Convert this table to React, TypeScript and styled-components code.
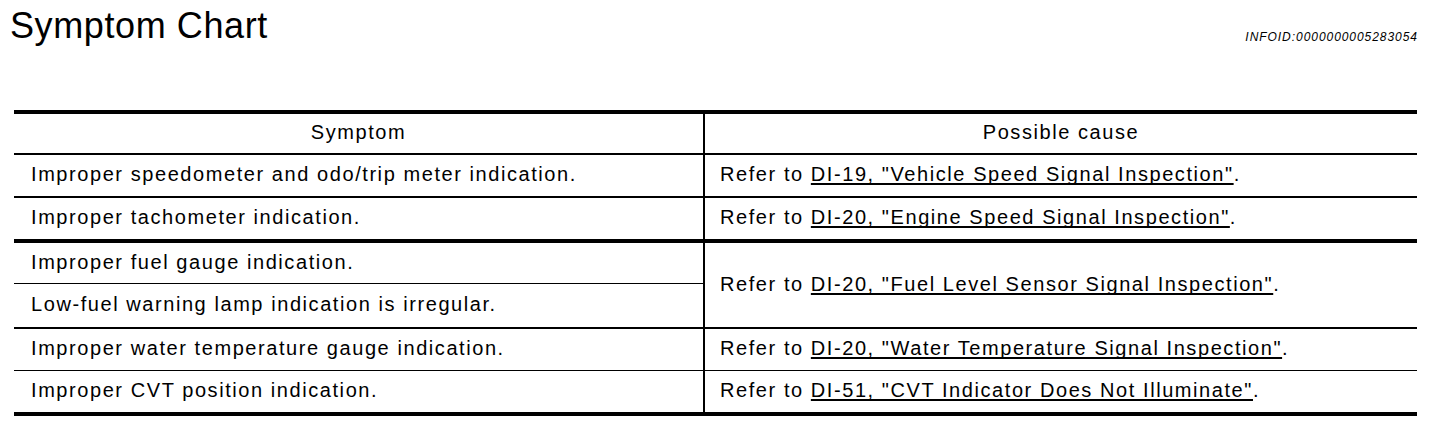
import React from "react";
import styled, { createGlobalStyle } from "styled-components";

const GlobalStyle = createGlobalStyle`
  html, body { margin: 0; padding: 0; background: #ffffff; }
  body { font-family: "Liberation Sans", Arial, sans-serif; color: #000; }
`;

const Page = styled.div`
  width: 1456px;
  height: 428px;
  background: #fff;
  overflow: hidden;
`;

const HeaderBar = styled.div`
  display: flex;
  justify-content: space-between;
  align-items: flex-start;
  padding: 5px 38px 0 10px;
`;

const Title = styled.h1`
  margin: 0;
  font-weight: normal;
  font-size: 36px;
  line-height: 41px;
  letter-spacing: 0.6px;
`;

const InfoId = styled.div`
  margin-top: 26px;
  font-size: 12px;
  line-height: 12px;
  font-style: italic;
  letter-spacing: 0.95px;
`;

const Table = styled.div`
  margin: 64px 39px 0 14px;
  display: grid;
  grid-template-columns: 689px 1fr;
  grid-template-rows: 41px 43px 45px 41px 45px 42px 41px;
  border-top: 4px solid #000;
  border-bottom: 4px solid #000;
`;

type CellProps = {
  $border: number;
  $right?: boolean;
  $head?: boolean;
  $span?: number;
};

const Cell = styled.div<CellProps>`
  box-sizing: border-box;
  display: flex;
  align-items: center;
  justify-content: ${(p) => (p.$head ? "center" : "flex-start")};
  padding: ${(p) => (p.$head ? "0 0 2px 0" : p.$right ? "0 0 2px 15px" : "0 0 2px 17px")};
  border-bottom: ${(p) => p.$border}px solid #000;
  border-left: ${(p) => (p.$right ? "2px solid #000" : "none")};
  grid-row: ${(p) => (p.$span ? `span ${p.$span}` : "auto")};
  font-size: 20px;
  letter-spacing: 1.57px;
  white-space: nowrap;
`;

const Link = styled.span`
  text-decoration: underline;
  text-decoration-thickness: 2px;
  text-underline-offset: 2px;
  text-decoration-skip-ink: none;
`;

const Ref = ({ code, title }: { code: string; title: string }) => (
  <span>
    Refer to <Link>{`${code}, "${title}"`}</Link>.
  </span>
);

export default function App() {
  return (
    <>
      <GlobalStyle />
      <Page>
        <HeaderBar>
          <Title>Symptom Chart</Title>
          <InfoId>INFOID:0000000005283054</InfoId>
        </HeaderBar>
        <Table>
          <Cell $border={2} $head>Symptom</Cell>
          <Cell $border={2} $head $right>Possible cause</Cell>

          <Cell $border={2}>Improper speedometer and odo/trip meter indication.</Cell>
          <Cell $border={2} $right>
            <Ref code="DI-19" title="Vehicle Speed Signal Inspection" />
          </Cell>

          <Cell $border={4}>Improper tachometer indication.</Cell>
          <Cell $border={4} $right>
            <Ref code="DI-20" title="Engine Speed Signal Inspection" />
          </Cell>

          <Cell $border={1}>Improper fuel gauge indication.</Cell>
          <Cell $border={2} $right $span={2}>
            <Ref code="DI-20" title="Fuel Level Sensor Signal Inspection" />
          </Cell>
          <Cell $border={2}>Low-fuel warning lamp indication is irregular.</Cell>

          <Cell $border={1}>Improper water temperature gauge indication.</Cell>
          <Cell $border={1} $right>
            <Ref code="DI-20" title="Water Temperature Signal Inspection" />
          </Cell>

          <Cell $border={0}>Improper CVT position indication.</Cell>
          <Cell $border={0} $right>
            <Ref code="DI-51" title="CVT Indicator Does Not Illuminate" />
          </Cell>
        </Table>
      </Page>
    </>
  );
}
